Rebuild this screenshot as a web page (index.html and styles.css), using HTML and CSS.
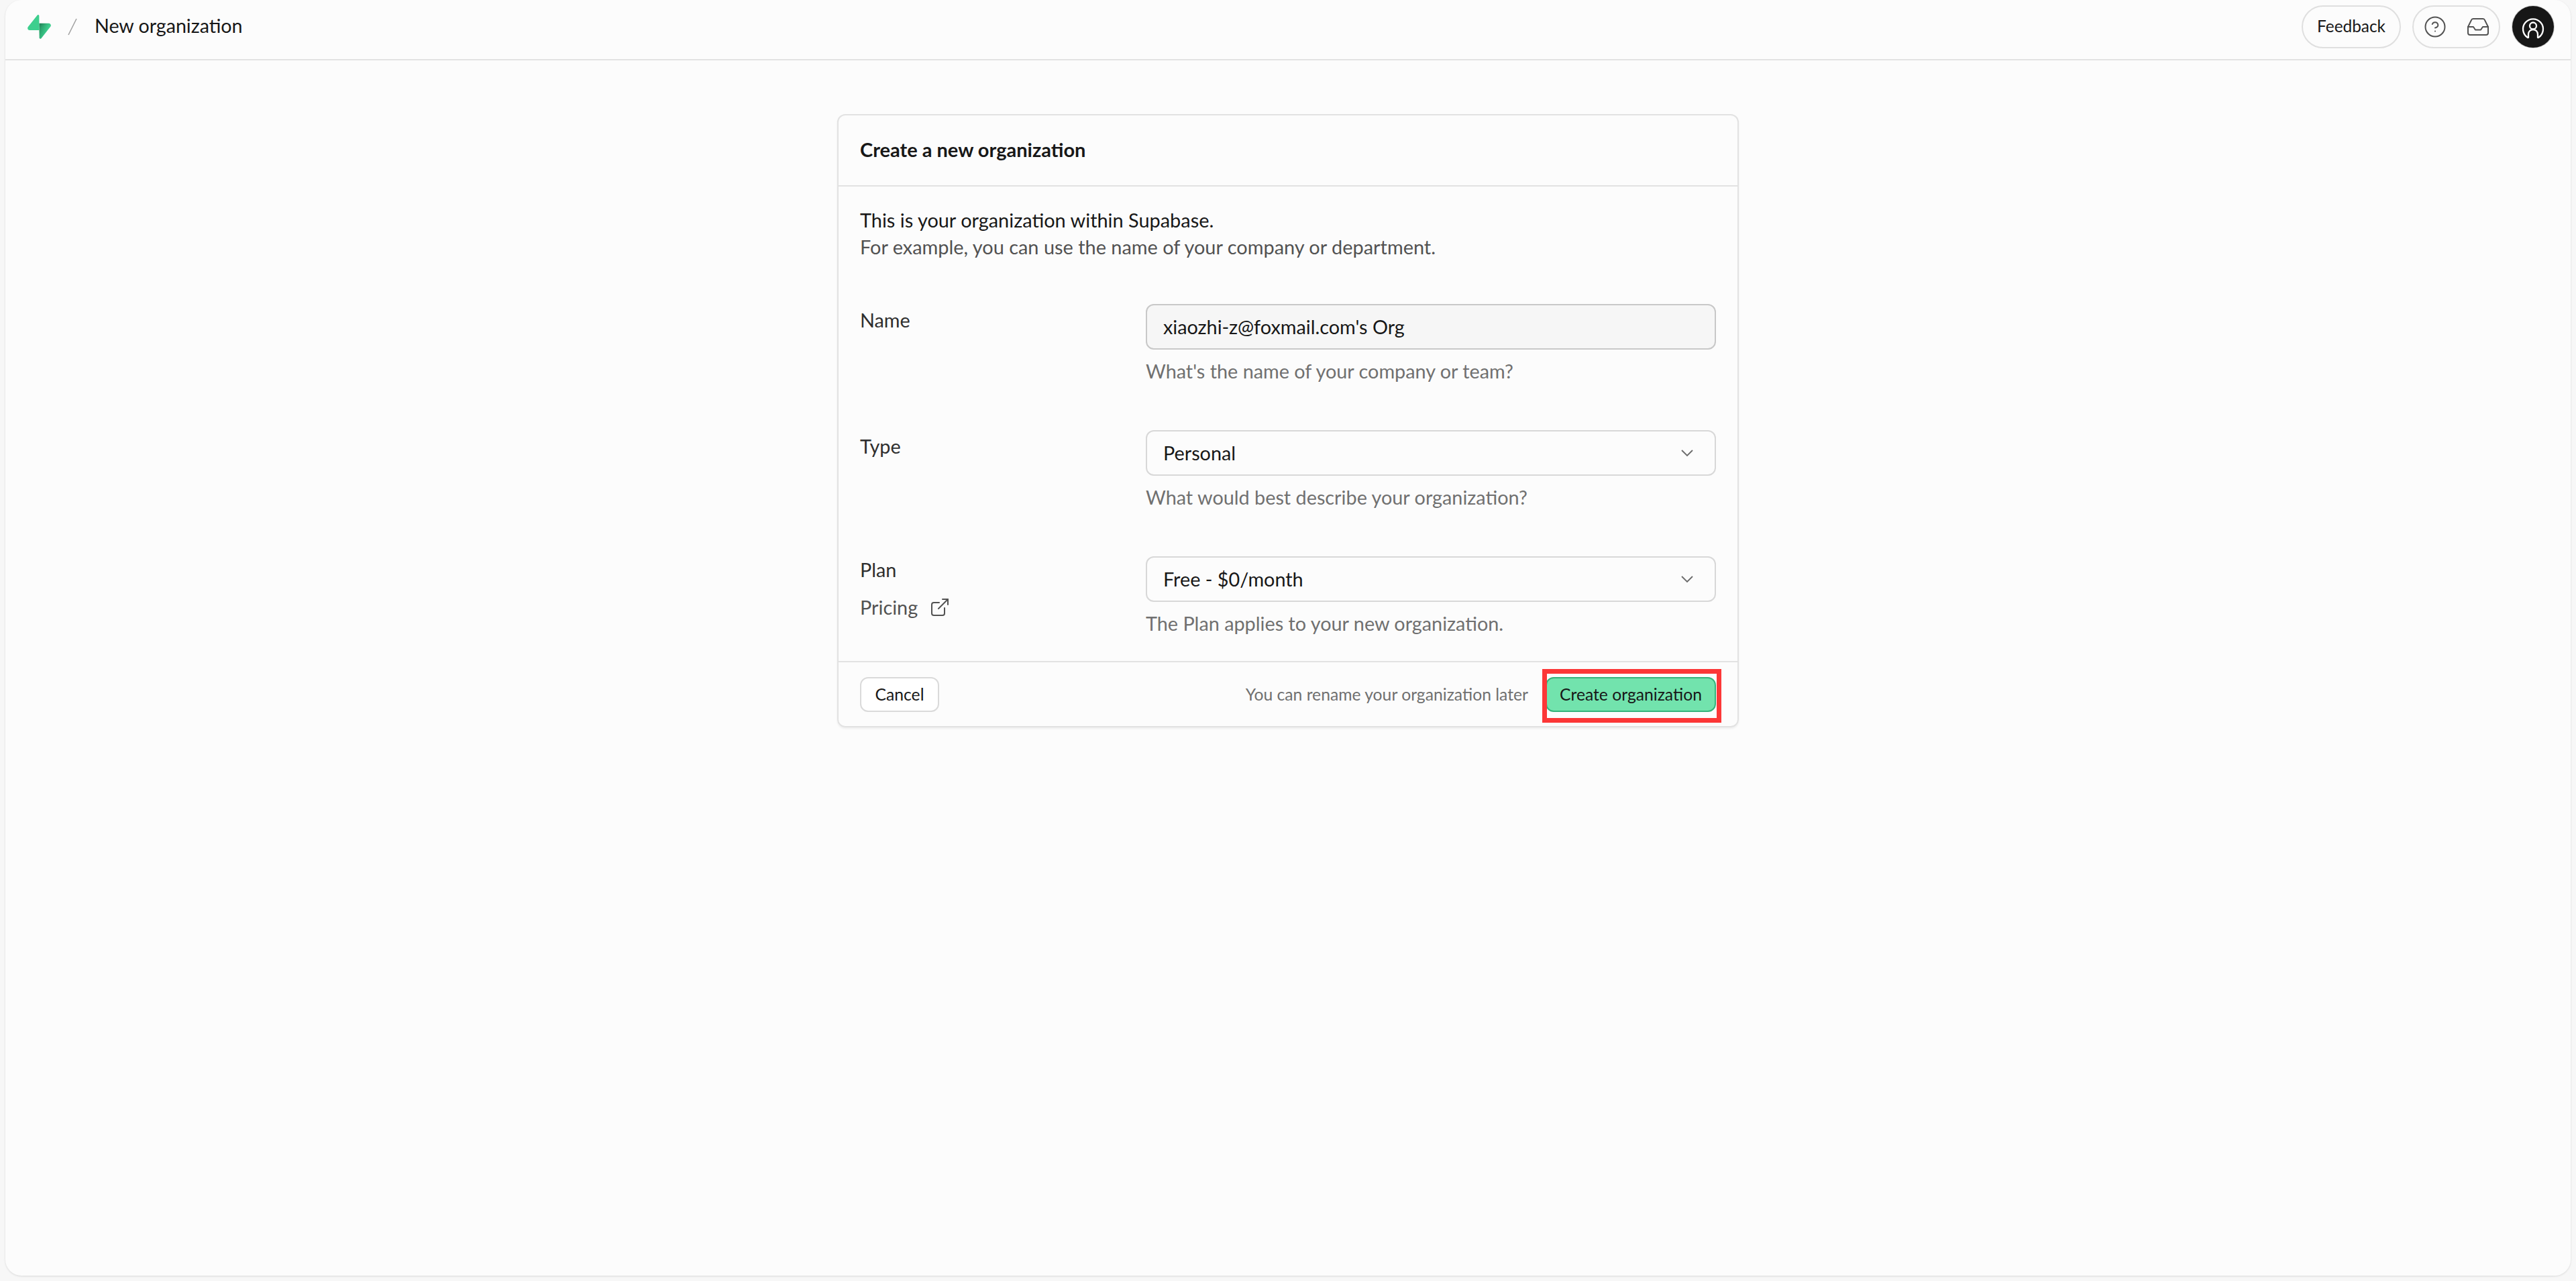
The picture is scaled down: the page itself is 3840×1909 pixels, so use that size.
FILE: index.html
```html
<!DOCTYPE html>
<html lang="en">
<head>
<meta charset="utf-8">
<title>New organization</title>
<link rel="stylesheet" href="styles.css">
</head>
<body>
<div class="frame">
  <header class="topbar">
    <div class="crumbs">
      <svg class="logo" viewBox="0 0 109 113" fill="none">
        <path d="M63.7076 110.284C60.8481 113.885 55.0502 111.912 54.9813 107.314L53.9738 40.0627L99.1935 40.0627C107.384 40.0627 111.952 49.5228 106.859 55.9374L63.7076 110.284Z" fill="url(#lg1)"/>
        <path d="M63.7076 110.284C60.8481 113.885 55.0502 111.912 54.9813 107.314L53.9738 40.0627L99.1935 40.0627C107.384 40.0627 111.952 49.5228 106.859 55.9374L63.7076 110.284Z" fill="url(#lg2)" fill-opacity="0.2"/>
        <path d="M45.317 2.07103C48.1765 -1.53037 53.9745 0.442937 54.0434 5.041L54.4849 72.2922H9.83113C1.64038 72.2922 -2.92775 62.8321 2.1655 56.4175L45.317 2.07103Z" fill="#3ECF8E"/>
        <defs>
          <linearGradient id="lg1" x1="53.9738" y1="54.974" x2="94.1635" y2="71.8295" gradientUnits="userSpaceOnUse"><stop stop-color="#249361"/><stop offset="1" stop-color="#3ECF8E"/></linearGradient>
          <linearGradient id="lg2" x1="36.1558" y1="30.578" x2="54.4844" y2="65.0806" gradientUnits="userSpaceOnUse"><stop/><stop offset="1" stop-opacity="0"/></linearGradient>
        </defs>
      </svg>
      <svg class="slash" viewBox="0 0 14 26" fill="none"><path d="M13 1 1 25" stroke="#a0a0a0" stroke-width="1.5"/></svg>
      <span class="crumb-text">New organization</span>
    </div>
    <div class="actions">
      <button class="pill feedback">Feedback</button>
      <div class="pill icons">
        <svg class="icon-help" viewBox="0 0 32 32" fill="none" stroke="#525252" stroke-width="2" stroke-linecap="round" stroke-linejoin="round"><circle cx="16" cy="16" r="14.5"/><path d="M11.8 12a4.4 4.4 0 0 1 8.5 1.4c0 2.9-4.3 4.1-4.3 4.1"/><path d="M16 22.6h.02"/></svg>
        <svg class="icon-inbox" viewBox="0 0 32 26" fill="none" stroke="#525252" stroke-width="2" stroke-linecap="round" stroke-linejoin="round"><path d="M1 13v9a3 3 0 0 0 3 3h24a3 3 0 0 0 3-3v-9"/><path d="M1 13h8l3 4.500h8l3-4.500h8"/><path d="M1 13 6 3a3 3 0 0 1 2.700-2h14.600a3 3 0 0 1 2.700 2l5 10"/></svg>
      </div>
      <div class="avatar">
        <svg viewBox="0 0 62 62" fill="none" stroke="#fff" stroke-width="2.300" stroke-linecap="round"><path d="M23 47a15 15 0 1 1 16 0"/><circle cx="31" cy="29.500" r="5"/><path d="M24 47v-5a7 7 0 0 1 14 0v5"/></svg>
      </div>
    </div>
  </header>
  <main class="content">
    <section class="card">
      <div class="card-head">Create a new organization</div>
      <div class="card-body">
        <div class="intro">
          <p class="intro-main">This is your organization within Supabase.</p>
          <p class="intro-sub">For example, you can use the name of your company or department.</p>
        </div>
        <div class="row">
          <div class="label label-offset">Name</div>
          <div class="field">
            <div class="control control-disabled">xiaozhi-z@foxmail.com's Org</div>
            <div class="hint">What's the name of your company or team?</div>
          </div>
        </div>
        <div class="row">
          <div class="label label-offset">Type</div>
          <div class="field">
            <div class="control">Personal<svg class="chev" viewBox="0 0 18 11" fill="none"><path d="M1 1l8 8 8-8" stroke="#6b6b6b" stroke-width="1.900"/></svg></div>
            <div class="hint">What would best describe your organization?</div>
          </div>
        </div>
        <div class="row">
          <div class="label-stack">
            <div class="label">Plan</div>
            <div class="pricing">Pricing
              <svg class="ext" viewBox="0 0 26 26" fill="none" stroke="#525252" stroke-width="2" stroke-linecap="round" stroke-linejoin="round"><path d="M20 14v8a3 3 0 0 1-3 3H4a3 3 0 0 1-3-3V9a3 3 0 0 1 3-3h8"/><path d="M17 1h8v8"/><path d="M25 1 11 15"/></svg>
            </div>
          </div>
          <div class="field">
            <div class="control">Free - $0/month<svg class="chev" viewBox="0 0 18 11" fill="none"><path d="M1 1l8 8 8-8" stroke="#6b6b6b" stroke-width="1.900"/></svg></div>
            <div class="hint">The Plan applies to your new organization.</div>
          </div>
        </div>
      </div>
      <div class="card-foot">
        <button class="btn btn-cancel">Cancel</button>
        <div class="foot-right">
          <span class="foot-note">You can rename your organization later</span>
          <button class="btn btn-primary">Create organization</button>
        </div>
        <div class="highlight"></div>
      </div>
    </section>
  </main>
</div>
</body>
</html>
```
FILE: styles.css
```css
* { box-sizing: border-box; }
html, body { height: 100%; margin: 0; }
body {
  display: flex;
  padding: 0 8px 8px;
  background: #f7f7f7;
  font-family: "Lato", "Liberation Sans", sans-serif;
  color: #171717;
  overflow: hidden;
}
p { margin: 0; }
button { font: inherit; color: inherit; cursor: pointer; }
.frame {
  flex: 1;
  display: flex;
  flex-direction: column;
  background: #fcfcfc;
  border-radius: 24px;
  box-shadow: 0 1px 3px rgba(0,0,0,.12);
  overflow: hidden;
}
.topbar {
  height: 90px;
  flex: none;
  display: flex;
  align-items: flex-start;
  justify-content: space-between;
  padding: 8px 25px 0 33px;
  border-bottom: 2px solid #e2e2e2;
}
.crumbs { display: flex; align-items: center; height: 64px; }
.logo { width: 35px; height: 36px; margin-top: -1px; }
.slash { width: 14px; height: 26px; margin-left: 25px; }
.crumb-text { font-size: 28.6px; margin-left: 26px; line-height: 40px; margin-top: -4px; }
.actions { display: flex; align-items: flex-start; }
.pill {
  height: 64px;
  border: 2px solid #dfdfdf;
  border-radius: 32px;
  background: transparent;
}
.feedback { width: 148px; font-size: 24.4px; padding: 0 0 3px; margin-right: 17px; }
.icons {
  width: 131px;
  display: flex;
  align-items: center;
  padding-left: 16px;
  margin-right: 18px;
}
.icon-help { width: 32px; height: 32px; }
.icon-inbox { width: 32px; height: 26px; margin-left: 32px; }
.avatar {
  width: 62px;
  height: 62px;
  margin-top: 1px;
  border-radius: 50%;
  background: #171717;
  box-shadow: 0 0 0 1px #cfcfcf;
}
.avatar svg { display: block; width: 62px; height: 62px; }
.content { flex: 1; display: flex; justify-content: center; padding-top: 80px; }
.card {
  width: 1344px;
  height: 914px;
  border: 2px solid #e2e2e2;
  border-radius: 12px;
  box-shadow: 0 2px 3px rgba(0,0,0,.06);
  display: flex;
  flex-direction: column;
}
.card-head {
  height: 106px;
  flex: none;
  display: flex;
  align-items: center;
  padding: 0 32px 4px;
  font-size: 29px;
  font-weight: 700;
  border-bottom: 2px solid #e2e2e2;
}
.card-body { flex: 1; padding: 30px 32px 0; }
.intro { font-size: 28.9px; line-height: 40px; margin-bottom: 65px; }
.intro-sub { color: #525252; }
.row {
  display: grid;
  grid-template-columns: 426px 1fr;
  margin-bottom: 68px;
  font-size: 28.8px;
  line-height: 40px;
}
.row:last-child { margin-bottom: 0; }
.label { color: #2e2e2e; }
.label-offset { padding-top: 4px; }
.pricing {
  display: flex;
  align-items: center;
  margin-top: 16px;
  color: #525252;
}
.ext { width: 26px; height: 26px; margin-left: 20px; }
.control {
  height: 68px;
  display: flex;
  align-items: center;
  justify-content: space-between;
  padding: 0 32px 0 24px;
  border: 2px solid #d8d8d8;
  border-radius: 12px;
}
.control-disabled { background: #f6f6f6; border-color: #c8c8c8; }
.chev { width: 18px; height: 11px; }
.hint { margin-top: 12px; color: #707070; }
.card-foot {
  position: relative;
  height: 97px;
  flex: none;
  display: flex;
  align-items: center;
  justify-content: space-between;
  padding: 0 32px;
  border-top: 2px solid #e2e2e2;
}
.foot-right { display: flex; align-items: center; gap: 26px; }
.foot-note { font-size: 24.7px; color: #707070; }
.btn {
  height: 52px;
  border-radius: 12px;
  font-size: 24.7px;
  padding: 0;
}
.btn-cancel { width: 118px; background: #fff; border: 2px solid #dadada; }
.btn-primary { width: 254px; background: #72e3ad; border: 2px solid #34b27b; }
.highlight {
  position: absolute;
  right: 24px;
  top: 10px;
  width: 267px;
  height: 80px;
  border: 7px solid #fc3737;
  pointer-events: none;
}
```
